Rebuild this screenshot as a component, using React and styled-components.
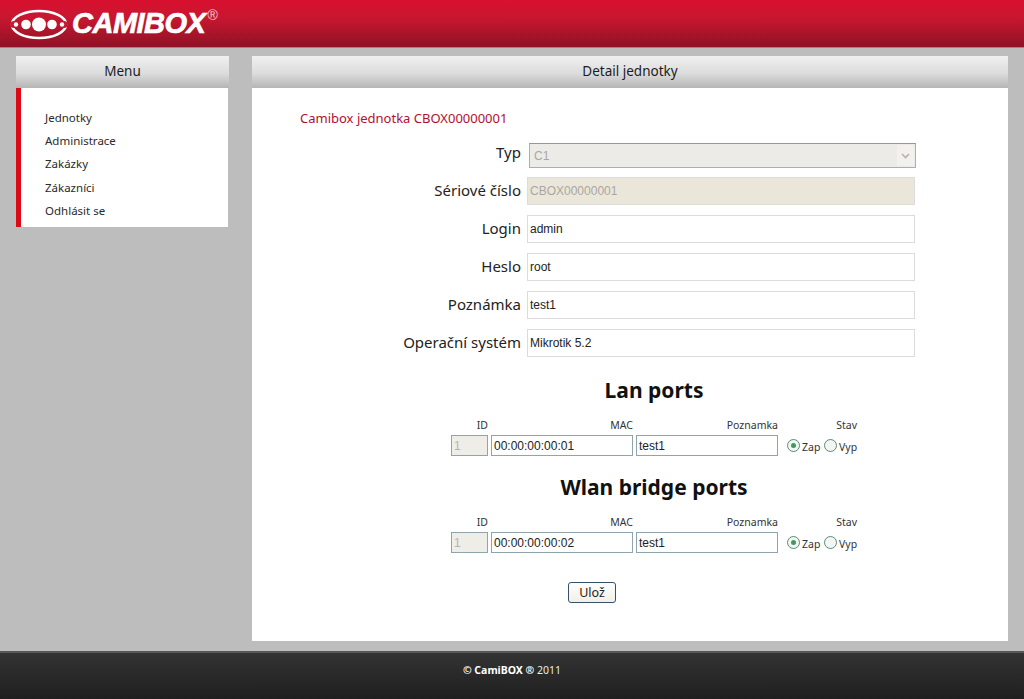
import styled, { createGlobalStyle } from "styled-components";

const GlobalStyle = createGlobalStyle`
  * {
    margin: 0;
    padding: 0;
    box-sizing: border-box;
  }

  body {
    background: #bdbdbd;
    font-family: "Noto Sans", "DejaVu Sans", sans-serif;
    color: #222;
  }
`;

const Page = styled.div`
  display: flex;
  flex-direction: column;
  min-height: 699px;
`;

const TopBar = styled.header`
  display: flex;
  align-items: flex-start;
  height: 48px;
  padding: 9px 0 0 10px;
  background: linear-gradient(#d8102e 0%, #c91730 35%, #a5142a 75%, #8f1226 97%, #d9a9ae 100%);
`;

const LogoText = styled.span`
  margin: -1px 0 0 4px;
  font-family: "Liberation Sans", sans-serif;
  font-size: 29px;
  line-height: 30px;
  font-weight: 700;
  font-style: italic;
  letter-spacing: -0.5px;
  color: #fff;
  -webkit-text-stroke: 0.7px #fff;
`;

const LogoMark = styled.span`
  margin: -2px 0 0 2px;
  font-family: "Liberation Sans", sans-serif;
  font-size: 14px;
  color: #f3d3d6;
`;

const Main = styled.main`
  flex: 1;
  display: grid;
  grid-template-columns: 213px 756px;
  column-gap: 23px;
  padding: 8px 16px 10px;
`;

const PanelHead = styled.h2`
  height: 32px;
  font-size: 13.5px;
  font-weight: 400;
  line-height: 30px;
  text-align: center;
  color: #1c1c1c;
  background: linear-gradient(#f0f0f0, #dcdcdc 55%, #b5b5b5);
`;

const MenuList = styled.ul`
  display: flex;
  flex-direction: column;
  width: 212px;
  height: 139px;
  padding: 18px 0 0 24px;
  list-style: none;
  background: #fff;
  border-left: 5px solid #dc0a14;
`;

const MenuItem = styled.li`
  height: 23.2px;
  font-size: 11.5px;
  line-height: 23px;
  color: #2a2a2a;
`;

const Sheet = styled.section`
  height: 553px;
  background: #fff;
`;

const Title = styled.h1`
  margin-left: 48px;
  padding-top: 22px;
  font-size: 13px;
  font-weight: 400;
  line-height: 17px;
  color: #b3102f;
`;

const Form = styled.form`
  display: flex;
  flex-direction: column;
  gap: 10px;
  margin-top: 12px;
`;

const FormRow = styled.div`
  display: grid;
  grid-template-columns: 269px 388px;
  column-gap: 6px;
  height: 28px;
`;

const Label = styled.label`
  font-size: 15px;
  line-height: 27px;
  text-align: right;
  color: #222;
`;

const TextInput = styled.input`
  width: 100%;
  height: 28px;
  padding: 0 2px;
  border: 1px solid #dcdcdc;
  outline: none;
  font-family: "Liberation Sans", sans-serif;
  font-size: 12px;
  color: ${(p) => (p.disabled ? "#aaa79f" : "#222")};
  background: ${(p) => (p.disabled ? "#ebe6da" : "#fff")};
`;

const SelectBox = styled.div`
  display: flex;
  align-items: center;
  justify-content: space-between;
  align-self: end;
  height: 25px;
  margin: 0 -1px -1px 2px;
  padding: 0 1px 0 4px;
  border: 1px solid #a8b0b0;
  border-top-color: #8d9aa0;
  font-family: "Liberation Sans", sans-serif;
  font-size: 12px;
  color: #aaa79f;
  background: #edebe7;
`;

const SelectArrow = styled.span`
  display: flex;
  align-items: center;
  justify-content: center;
  width: 17px;
  height: 21px;
  background: #f2f1ee;
`;

const PortSection = styled.section`
  width: 406px;
  margin-left: 199px;
  padding-top: ${(p) => p.$top}px;
`;

const PortHeading = styled.h3`
  font-size: 21px;
  font-weight: 700;
  line-height: 30px;
  text-align: center;
  color: #111;
`;

const PortGrid = styled.div`
  display: grid;
  grid-template-columns: 37px 142px 142px 76px;
  column-gap: 3px;
  margin-top: 13px;
`;

const PortHead = styled.span`
  height: 17px;
  font-size: 10.5px;
  line-height: 14px;
  text-align: right;
  color: #333;
`;

const PortInput = styled.input`
  width: 100%;
  height: 21px;
  padding: 0 2px;
  border: 1px solid #8fa5ab;
  outline: none;
  font-family: "Liberation Sans", sans-serif;
  font-size: 12px;
  color: ${(p) => (p.disabled ? "#b5b5ae" : "#222")};
  background: ${(p) => (p.disabled ? "#eeede8" : "#fff")};
`;

const RadioCell = styled.div`
  display: flex;
  align-items: center;
  justify-content: flex-end;
  height: 21px;
`;

const RadioDot = styled.span`
  display: flex;
  align-items: center;
  justify-content: center;
  width: 13px;
  height: 13px;
  border: 1px solid #5d8a78;
  border-radius: 50%;
  background: #f4f6f4;

  &::after {
    content: "";
    display: ${(p) => (p.$on ? "block" : "none")};
    width: 5px;
    height: 5px;
    border-radius: 50%;
    background: #3f9a5e;
  }
`;

const RadioText = styled.span`
  width: ${(p) => p.$width}px;
  padding: 3px 0 0 2px;
  font-size: 10.5px;
  color: #333;
`;

const SaveRow = styled.div`
  display: flex;
  width: 48px;
  margin: 29px 0 0 316px;
`;

const SaveButton = styled.button`
  width: 48px;
  height: 21px;
  border: 1px solid #39506a;
  border-radius: 3px;
  font-family: inherit;
  font-size: 12.5px;
  color: #222;
  background: linear-gradient(#fff, #f2efe6);
`;

const Footer = styled.footer`
  height: 48px;
  padding-top: 9px;
  border-top: 2px solid #55575a;
  font-size: 10.5px;
  line-height: 16px;
  text-align: center;
  color: #e8e8e8;
  background: linear-gradient(#333, #1f1f1f);

  b {
    color: #fff;
  }
`;

const menuItems = ["Jednotky", "Administrace", "Zakázky", "Zákazníci", "Odhlásit se"];

function Logo() {
  return (
    <svg width="58" height="31" viewBox="0 0 58 31" aria-hidden="true">
      <ellipse cx="29" cy="15.5" rx="27" ry="13.5" fill="none" stroke="#fff" strokeWidth="2.6" />
      <circle cx="4" cy="15.5" r="3.6" fill="#c91730" />
      <circle cx="54" cy="15.5" r="3.6" fill="#c91730" />
      <circle cx="6" cy="15.5" r="2.2" fill="#fff" />
      <circle cx="16" cy="15.5" r="4.8" fill="#fff" />
      <circle cx="29" cy="15.5" r="7" fill="#fff" />
      <circle cx="42" cy="15.5" r="4.8" fill="#fff" />
      <circle cx="52" cy="15.5" r="2.2" fill="#fff" />
    </svg>
  );
}

function PortRow({ title, mac, top }) {
  return (
    <PortSection $top={top}>
      <PortHeading>{title}</PortHeading>
      <PortGrid>
        <PortHead>ID</PortHead>
        <PortHead>MAC</PortHead>
        <PortHead>Poznamka</PortHead>
        <PortHead>Stav</PortHead>
        <PortInput disabled defaultValue="1" />
        <PortInput defaultValue={mac} />
        <PortInput defaultValue="test1" />
        <RadioCell>
          <RadioDot $on />
          <RadioText $width={24}>Zap</RadioText>
          <RadioDot />
          <RadioText $width={20}>Vyp</RadioText>
        </RadioCell>
      </PortGrid>
    </PortSection>
  );
}

export default function App() {
  return (
    <>
      <GlobalStyle />
      <Page>
        <TopBar>
          <Logo />
          <LogoText>CAMIBOX</LogoText>
          <LogoMark>®</LogoMark>
        </TopBar>
        <Main>
          <aside>
            <PanelHead>Menu</PanelHead>
            <MenuList>
              {menuItems.map((item) => (
                <MenuItem key={item}>{item}</MenuItem>
              ))}
            </MenuList>
          </aside>
          <div>
            <PanelHead>Detail jednotky</PanelHead>
            <Sheet>
              <Title>Camibox jednotka CBOX00000001</Title>
              <Form>
                <FormRow>
                  <Label>Typ</Label>
                  <SelectBox>
                    C1
                    <SelectArrow>
                      <svg width="9" height="6" viewBox="0 0 9 6" aria-hidden="true">
                        <path d="M1 1l3.5 3.5L8 1" fill="none" stroke="#b9b2ab" strokeWidth="1.6" />
                      </svg>
                    </SelectArrow>
                  </SelectBox>
                </FormRow>
                <FormRow>
                  <Label>Sériové číslo</Label>
                  <TextInput disabled defaultValue="CBOX00000001" />
                </FormRow>
                <FormRow>
                  <Label>Login</Label>
                  <TextInput defaultValue="admin" />
                </FormRow>
                <FormRow>
                  <Label>Heslo</Label>
                  <TextInput defaultValue="root" />
                </FormRow>
                <FormRow>
                  <Label>Poznámka</Label>
                  <TextInput defaultValue="test1" />
                </FormRow>
                <FormRow>
                  <Label>Operační systém</Label>
                  <TextInput defaultValue="Mikrotik 5.2" />
                </FormRow>
              </Form>
              <PortRow title="Lan ports" mac="00:00:00:00:01" top={18} />
              <PortRow title="Wlan bridge ports" mac="00:00:00:00:02" top={16} />
              <SaveRow>
                <SaveButton type="button">Ulož</SaveButton>
              </SaveRow>
            </Sheet>
          </div>
        </Main>
        <Footer>
          <b>© CamiBOX ®</b> 2011
        </Footer>
      </Page>
    </>
  );
}
